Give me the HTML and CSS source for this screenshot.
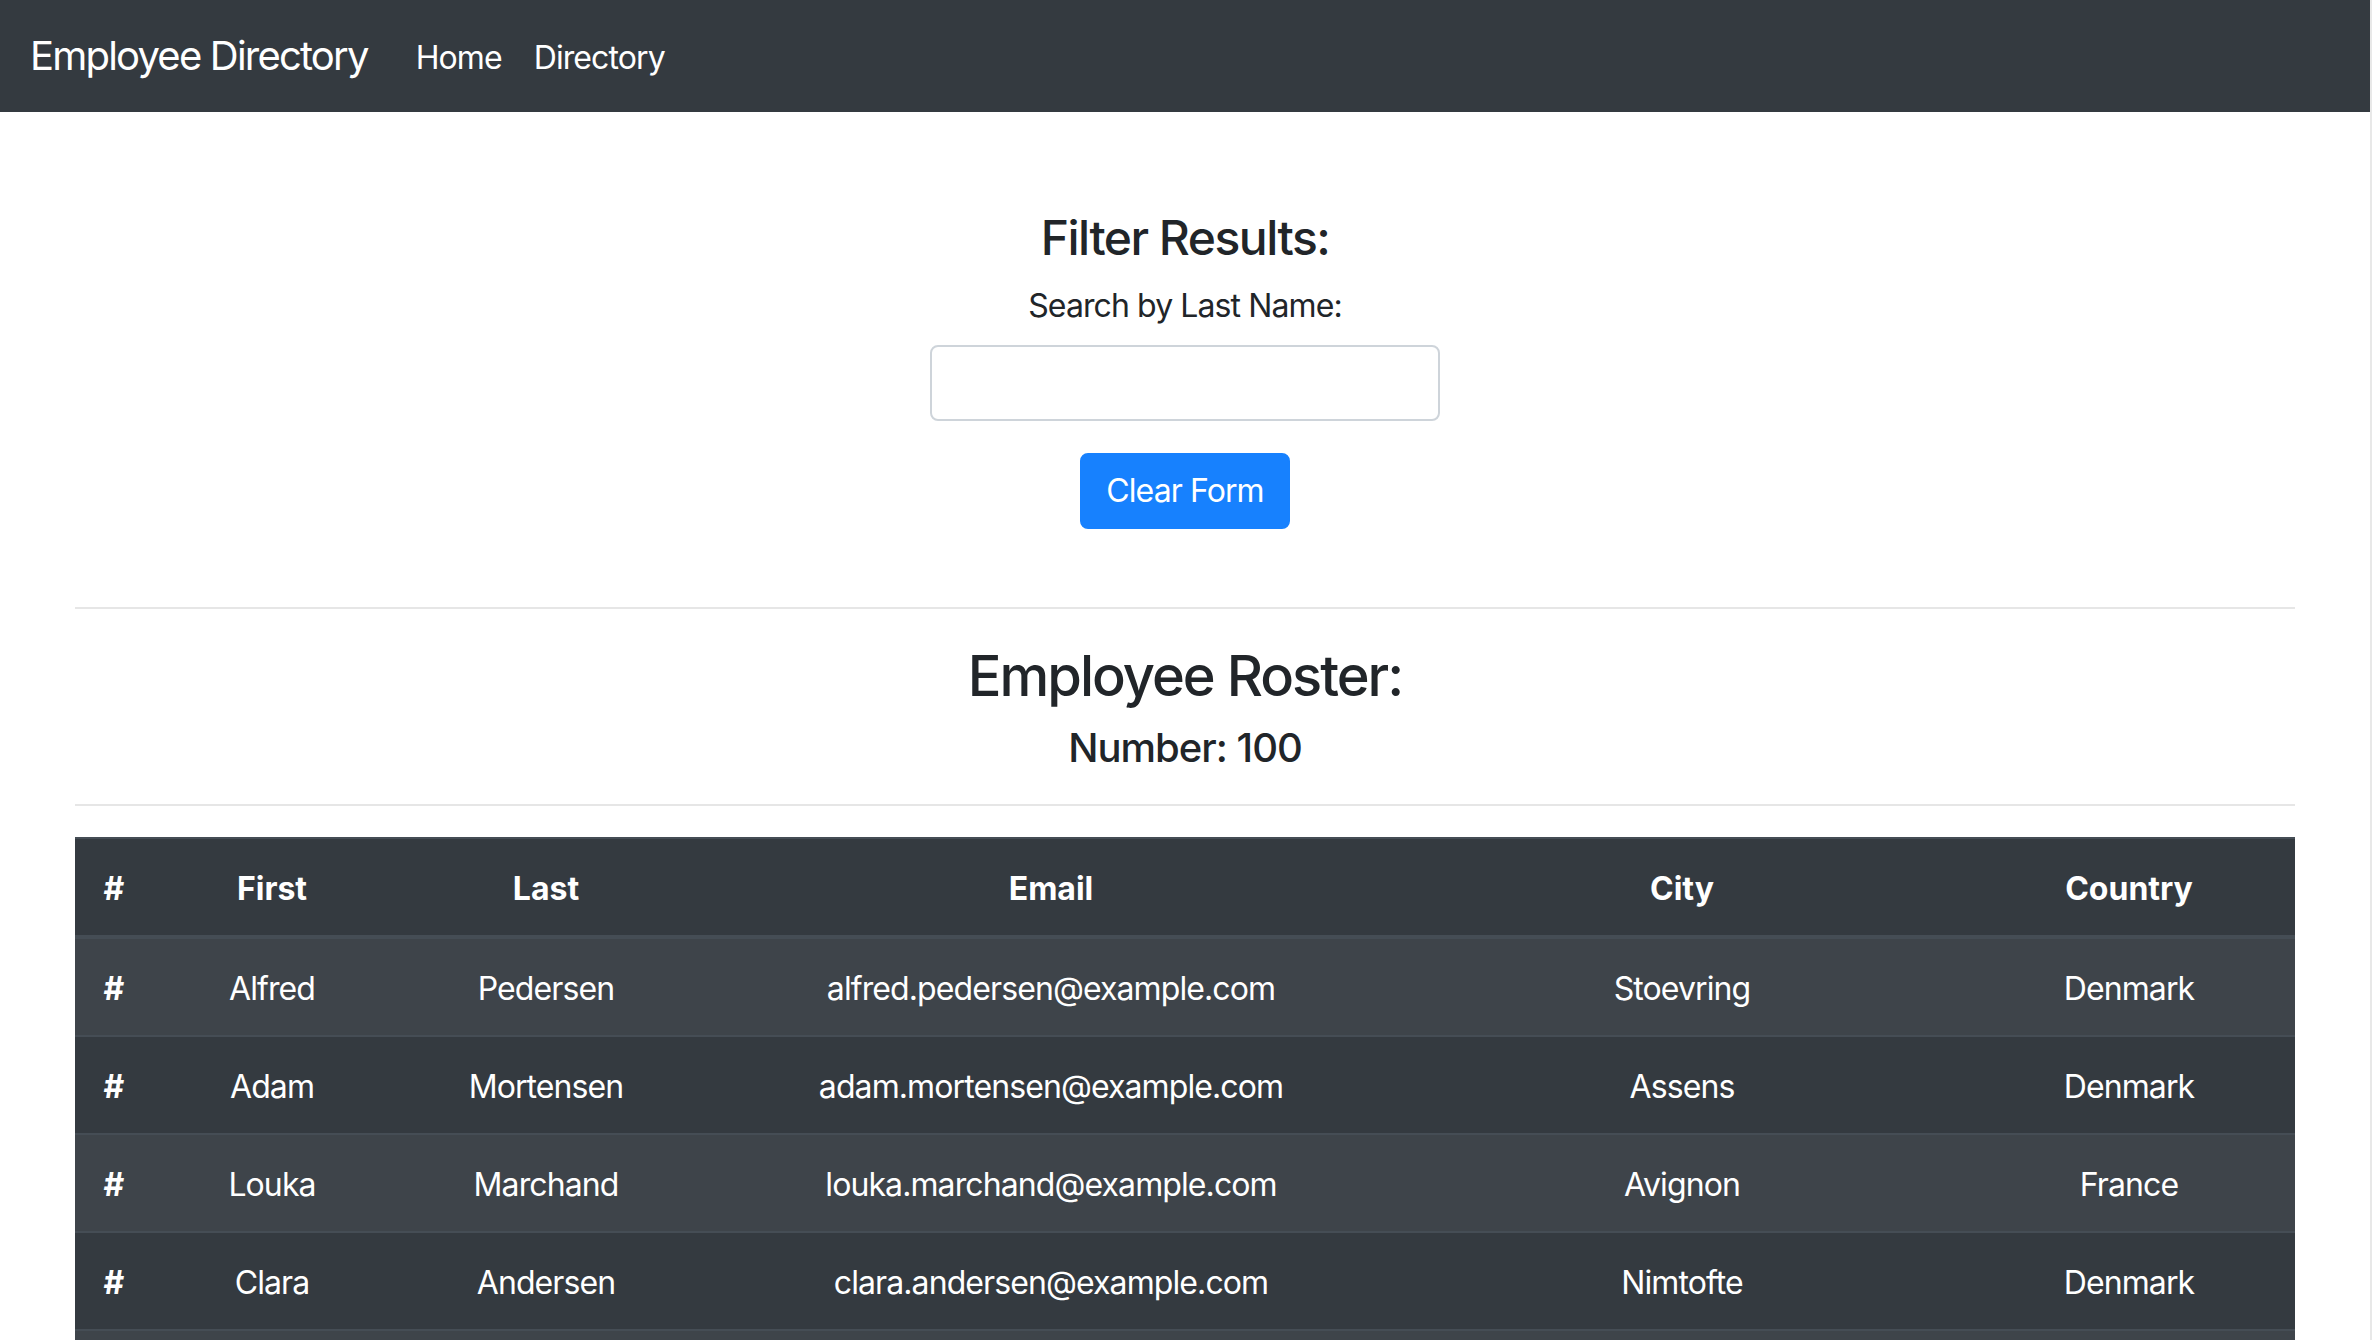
FILE: index.html
```html
<!DOCTYPE html>
<html lang="en">
<head>
<meta charset="utf-8">
<title>Employee Directory</title>
<link rel="stylesheet" href="styles.css">
</head>
<body>
<nav class="navbar">
  <a class="brand" href="#">Employee Directory</a>
  <ul class="nav-links">
    <li><a class="nav-link" href="#">Home</a></li>
    <li><a class="nav-link" href="#">Directory</a></li>
  </ul>
</nav>
<main class="container">
  <section class="filter">
    <h4 class="filter-title">Filter Results:</h4>
    <label class="filter-label" for="search">Search by Last Name:</label>
    <input class="search-input" id="search" type="text">
    <button class="btn-primary" type="button">Clear Form</button>
  </section>
  <hr class="divider">
  <h3 class="roster-title">Employee Roster:</h3>
  <h5 class="roster-count">Number: 100</h5>
  <hr class="divider">
  <table class="roster">
    <thead>
      <tr>
        <th class="col-num">#</th>
        <th class="col-first">First</th>
        <th class="col-last">Last</th>
        <th class="col-email">Email</th>
        <th class="col-city">City</th>
        <th class="col-country">Country</th>
      </tr>
    </thead>
    <tbody>
      <tr><th>#</th><td>Alfred</td><td>Pedersen</td><td>alfred.pedersen@example.com</td><td>Stoevring</td><td>Denmark</td></tr>
      <tr><th>#</th><td>Adam</td><td>Mortensen</td><td>adam.mortensen@example.com</td><td>Assens</td><td>Denmark</td></tr>
      <tr><th>#</th><td>Louka</td><td>Marchand</td><td>louka.marchand@example.com</td><td>Avignon</td><td>France</td></tr>
      <tr><th>#</th><td>Clara</td><td>Andersen</td><td>clara.andersen@example.com</td><td>Nimtofte</td><td>Denmark</td></tr>
      <tr><th>#</th><td>Leo</td><td>Lambert</td><td>leo.lambert@example.com</td><td>Rennes</td><td>France</td></tr>
      <tr><th>#</th><td>Emma</td><td>Nielsen</td><td>emma.nielsen@example.com</td><td>Aarhus</td><td>Denmark</td></tr>
    </tbody>
  </table>
</main>
</body>
</html>
```

FILE: styles.css
```css
* { box-sizing: border-box; }

html { overflow: hidden; }

body {
  margin: 0;
  border-right: 2px solid #e8e8e8;
  font-family: Inter, "Liberation Sans", sans-serif;
  font-size: 32px;
  line-height: 48px;
  letter-spacing: -0.9px;
  color: #212529;
  background: #fff;
}

.navbar {
  display: flex;
  align-items: center;
  height: 112px;
  padding: 16px 30px;
  background: #343a40;
}

.brand {
  font-size: 40px;
  line-height: 60px;
  letter-spacing: -1.8px;
  padding: 10px 0;
  margin-right: 32px;
  color: #fff;
  text-decoration: none;
  white-space: nowrap;
}

.nav-links {
  display: flex;
  list-style: none;
  margin: 0;
  padding: 0;
}

.nav-link {
  display: block;
  padding: 18px 16px 14px;
  color: #fff;
  text-decoration: none;
}

.container {
  width: 2220px;
  margin: 0 auto;
}

.filter {
  display: flex;
  flex-direction: column;
  align-items: center;
  padding-top: 97px;
}

.filter-title {
  margin: 0;
  font-size: 48px;
  line-height: 57.6px;
  letter-spacing: -1.5px;
  font-weight: 500;
}

.filter-label {
  margin-top: 15px;
  margin-bottom: 15px;
}

.search-input {
  width: 510px;
  height: 76px;
  border: 2px solid #ced4da;
  border-radius: 8px;
  padding: 12px 24px;
  font: inherit;
}

.btn-primary {
  margin-top: 32px;
  height: 76px;
  padding: 12px 24px;
  border: 2px solid #1781fe;
  border-radius: 8px;
  background: #1781fe;
  color: #fff;
  font: inherit;
  letter-spacing: -0.9px;
  line-height: 48px;
}

.divider {
  margin: 0;
  height: 0;
  border: 0;
  border-top: 2px solid #e6e6e6;
}

.filter + .divider { margin-top: 78px; }

.roster-title {
  margin: 34px 0 0;
  text-align: center;
  font-size: 56px;
  line-height: 67.2px;
  letter-spacing: -2px;
  font-weight: 500;
}

.roster-count {
  margin: 14px 0 32px;
  text-align: center;
  font-size: 40px;
  line-height: 48px;
  letter-spacing: -1px;
  font-weight: 500;
}

.roster {
  margin-top: 31px;
  width: 100%;
  table-layout: fixed;
  border-collapse: collapse;
  background: #343a40;
  color: #fff;
}

.roster th,
.roster td {
  padding: 26px 24px 22px;
  line-height: 48px;
  text-align: center;
  border-top: 2px solid #454d55;
  font-weight: 400;
  white-space: nowrap;
}

.roster th { font-weight: 700; letter-spacing: 0; }

.roster thead th { border-bottom: 4px solid #454d55; }

.roster tbody tr:nth-of-type(odd) { background: #3e444a; }

.col-num { width: 78px; }
.col-first { width: 238px; }
.col-last { width: 310px; }
.col-email { width: 700px; }
.col-city { width: 562px; }
.col-country { width: 332px; }
```
